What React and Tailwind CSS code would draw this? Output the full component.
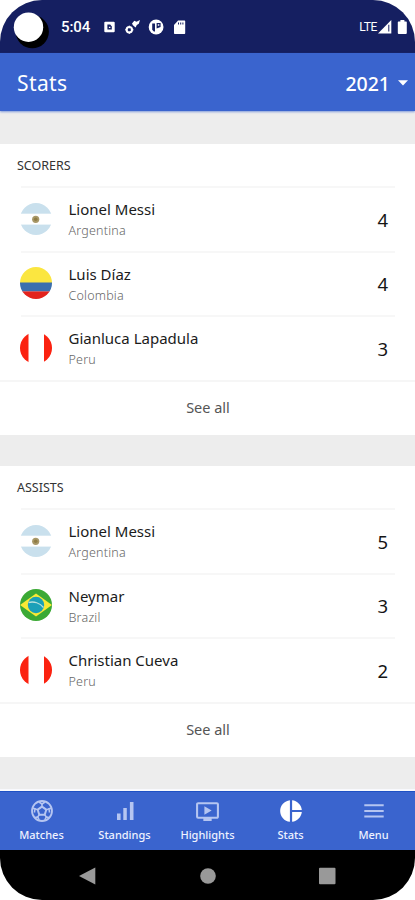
import { MdOndemandVideo, MdPieChart } from 'react-icons/md';

const FLAGS = {
  Argentina: (
    <>
      <rect width="32" height="32" fill="#fff" />
      <rect width="32" height="10.7" fill="#c9e0ed" />
      <rect y="21.6" width="32" height="10.4" fill="#c9e0ed" />
      <circle cx="15.7" cy="16.3" r="3.6" fill="#a89868" />
      <circle cx="15.7" cy="16.3" r="1.8" fill="#8f7c45" />
    </>
  ),
  Colombia: (
    <>
      <rect width="32" height="16" fill="#fbe640" />
      <rect y="15.5" width="32" height="9" fill="#3b6fae" />
      <rect y="24.4" width="32" height="8" fill="#e3221c" />
    </>
  ),
  Peru: (
    <>
      <rect width="32" height="32" fill="#fff" />
      <rect width="8.5" height="32" fill="#fb2210" />
      <rect x="24" width="8" height="32" fill="#fb2210" />
    </>
  ),
  Brazil: (
    <>
      <rect width="32" height="32" fill="#3ba935" />
      <path d="M0 16 16 4.5 32 16 16 27.5Z" fill="#f9e936" />
      <circle cx="16" cy="16" r="8.2" fill="#1ba0b8" />
      <path d="M8.5 13.5C14 12 20 14 23.5 18.5" stroke="#b8e0dc" strokeWidth="1.3" fill="none" />
    </>
  ),
};

const SECTIONS = [
  {
    title: 'SCORERS',
    rows: [
      { name: 'Lionel Messi', country: 'Argentina', value: 4 },
      { name: 'Luis Díaz', country: 'Colombia', value: 4 },
      { name: 'Gianluca Lapadula', country: 'Peru', value: 3 },
    ],
  },
  {
    title: 'ASSISTS',
    rows: [
      { name: 'Lionel Messi', country: 'Argentina', value: 5 },
      { name: 'Neymar', country: 'Brazil', value: 3 },
      { name: 'Christian Cueva', country: 'Peru', value: 2 },
    ],
  },
];

const Flag = ({ country }) => (
  <svg viewBox="0 0 32 32" className="h-8 w-8 shrink-0 rounded-full">
    {FLAGS[country]}
  </svg>
);

const StatusBar = () => (
  <div className="relative flex h-[53px] shrink-0 items-center bg-[#151f61] pl-[61px] pr-[6px] text-white">
    {/* Camera cutout */}
    <svg viewBox="0 0 40 40" className="absolute left-[12px] top-[10px] h-10 w-10">
      <circle cx="20.3" cy="21.7" r="16.6" fill="#000" />
      <circle cx="16.5" cy="17.2" r="14.7" fill="#fff" />
    </svg>
    <span className="mt-[2px] w-[43px] font-['Roboto'] text-[15px] font-medium leading-none tracking-[-0.1px]">5:04</span>
    <svg viewBox="0 0 86 16" className="h-4 w-[86px]">
      <rect x="0.3" y="2.7" width="10.4" height="10.6" rx="1" fill="#fff" />
      <path d="M3.4 10.6V5.4h2.8l1.6 2v3.2Z" fill="#151f61" />
      <path d="M4.9 7.8h1.5v1.2h-1.5Z" fill="#fff" />
      <circle cx="25.3" cy="10.8" r="2.7" fill="none" stroke="#fff" strokeWidth="2" />
      <path d="M25.3 6.6v8.4M21.1 10.8h8.4" stroke="#fff" strokeWidth="1" />
      <circle cx="25.3" cy="10.8" r="1.5" fill="#151f61" />
      <path d="m28 4.6 2.300-2.900 2.200 1 3.500-1.700-1.200 3.700-2 1.300-1.200 2.600-2.700-2.400Z" fill="#fff" />
      <circle cx="52.1" cy="8" r="7.4" fill="#fff" />
      <path d="M48.2 4.5h2.800v8h-1.200l-1.600-1.700ZM52.600 4h4v4l-4 1.400Z" fill="#151f61" />
      <path d="M53.8 5.3h1.500v1.500h-1.500Z" fill="#fff" />
      <path d="m70 6 4.100-4.500h6.100c.7 0 1 .3 1 1v11.400c0 .7-.3 1-1 1H71c-.7 0-1-.3-1-1Z" fill="#fff" />
      <path d="M74 3.500h1v2h-1Zm2.200 0h1v2h-1Zm2.200 0h1v2h-1Z" fill="#151f61" />
    </svg>
    <span className="ml-auto font-['Roboto'] text-[12px] leading-none tracking-[-0.4px]">LTE</span>
    <svg viewBox="0 0 32 16" className="h-4 w-8">
      <path d="M1 14.6 14.3 1v13.6Z" fill="#fff" />
      <path d="M11.3 5.8h1v6.7h-1Z" fill="#151f61" />
      <path d="M23.4 1h4v1.400h1.400c.7 0 1 .3 1 1V14c0 .6-.3.9-1 .9h-7c-.7 0-1-.3-1-.9V3.400c0-.7.3-1 1-1h1.600Z" fill="#fff" />
    </svg>
  </div>
);

const Header = () => (
  <header className="z-10 flex h-[58px] shrink-0 items-center justify-between bg-[#3a64ce] pl-[17px] pr-[7px] pt-[3px] text-white shadow-[0_1px_2px_rgba(58,100,206,0.6)]">
    <h1 className="text-[21px] leading-none tracking-[0.4px]">Stats</h1>
    <div className="flex items-center gap-[8px]">
      <span className="text-[19.5px] font-medium leading-none">2021</span>
      <svg viewBox="0 0 10 6" className="-mt-px h-[6px] w-[10px]">
        <path d="M0 .3h10L5 5.5Z" fill="#fff" />
      </svg>
    </div>
  </header>
);

const StatRow = ({ row }) => (
  <div className="flex h-[64.5px] items-center pl-5 pt-px">
    <Flag country={row.country} />
    <div className="ml-[16.5px] flex-1 pt-[3px]">
      <p className="text-[15px] leading-[21px] text-[#1b1b1b]">{row.name}</p>
      <p className="text-[12.5px] font-light leading-[21px] tracking-[0.2px] text-[#666]">{row.country}</p>
    </div>
    <span className="mr-[7px] pt-[2px] text-[18.5px] leading-6 text-[#151515]">{row.value}</span>
  </div>
);

const StatsCard = ({ section }) => (
  <section className="h-[290.5px] shrink-0 bg-white">
    <h2 className="flex h-[42px] items-center pl-[17px] pt-[2px] text-[12.5px] text-[#333]">
      {section.title}
    </h2>
    <ul className="mr-5">
      {section.rows.map((row) => (
        <li key={row.name}>
          <div className="-mb-[2px] ml-[21px] h-[2px] bg-[#f7f7f7]" />
          <StatRow row={row} />
        </li>
      ))}
    </ul>
    <button className="flex h-[54px] w-full items-center justify-center border-t-2 border-[#f6f6f6] pl-px text-[14.5px] text-[#555]">
      See all
    </button>
  </section>
);

const BallIcon = () => (
  <svg viewBox="0 0 24 24" className="h-6 w-6" fill="none" stroke="currentColor" strokeWidth="1.8">
    <circle cx="12" cy="12" r="10" />
    <path d="m12 7.600 4.300 3.100-1.600 5H9.300l-1.600-5Z" strokeWidth="2" />
    <path d="M12 7.600V5M16.300 10.700l2.700-.8M14.700 15.700l1.700 2.300M9.300 15.700 7.600 18M7.700 10.700 5 9.900" strokeWidth="1.5" />
    <path d="m9 3 3 2 3-2M21.500 9 19 9.900l.6 3.600M19 18.600l-2.700-.6-1.500 3M9.200 21l-1.500-3-2.700.6M4.400 13.500 5 9.900 2.500 9" strokeWidth="1.6" />
  </svg>
);

const BarsIcon = () => (
  <svg viewBox="0 0 24 24" className="h-6 w-6" fill="currentColor">
    <path d="M4 14.5h3.600V21H4ZM10.300 9h3.500v12h-3.500ZM16.900 3h3.600v18h-3.600Z" />
  </svg>
);

const MenuIcon = () => (
  <svg viewBox="0 0 24 24" className="h-6 w-6" fill="currentColor">
    <path d="M2.300 5.200h19.400v2H2.300ZM2.300 11h19.400v2H2.300ZM2.300 16.600h19.400v2H2.300Z" />
  </svg>
);

const TABS = [
  { label: 'Matches', icon: <BallIcon /> },
  { label: 'Standings', icon: <BarsIcon /> },
  { label: 'Highlights', icon: <MdOndemandVideo size={25} /> },
  { label: 'Stats', icon: <MdPieChart size={26} />, active: true },
  { label: 'Menu', icon: <MenuIcon /> },
];

const TabBar = () => (
  <nav className="grid h-[59px] shrink-0 grid-cols-5 border-t border-[#1e50c4] bg-[#3a64ce]">
    {TABS.map((tab) => (
      <div key={tab.label} className="flex flex-col items-center pt-[6px]">
        <div className={`flex h-[26px] items-center ${tab.active ? 'text-white' : 'text-[#b5c5f1]'}`}>
          {tab.icon}
        </div>
        <span className="mt-[4px] text-[11px] font-medium leading-[14px] text-[#eef2ff]">{tab.label}</span>
      </div>
    ))}
  </nav>
);

const SystemNav = () => (
  <div className="flex h-[50px] shrink-0 items-center bg-black pl-[79px] pt-px">
    <svg viewBox="0 0 258 18" className="h-[18px] w-[258px]" fill="#999">
      <path d="M0 9 16.3.5v17Z" />
      <circle cx="129" cy="9" r="7.8" />
      <rect x="240" y=".8" width="16.5" height="16.5" rx="1" />
    </svg>
  </div>
);

export default function App() {
  return (
    <div className="h-[900px] w-[415px] overflow-hidden bg-white font-['Noto_Sans',sans-serif]">
      <div className="flex h-full flex-col overflow-hidden rounded-[42px] bg-[#ededed]">
        <StatusBar />
        <Header />
        <main className="flex min-h-0 flex-1 flex-col gap-[31.5px] pt-[33px]">
          {SECTIONS.map((section) => (
            <StatsCard key={section.title} section={section} />
          ))}
        </main>
        <div className="h-[2px] shrink-0 bg-[#f8f9fd]" />
        <TabBar />
        <SystemNav />
      </div>
    </div>
  );
}
